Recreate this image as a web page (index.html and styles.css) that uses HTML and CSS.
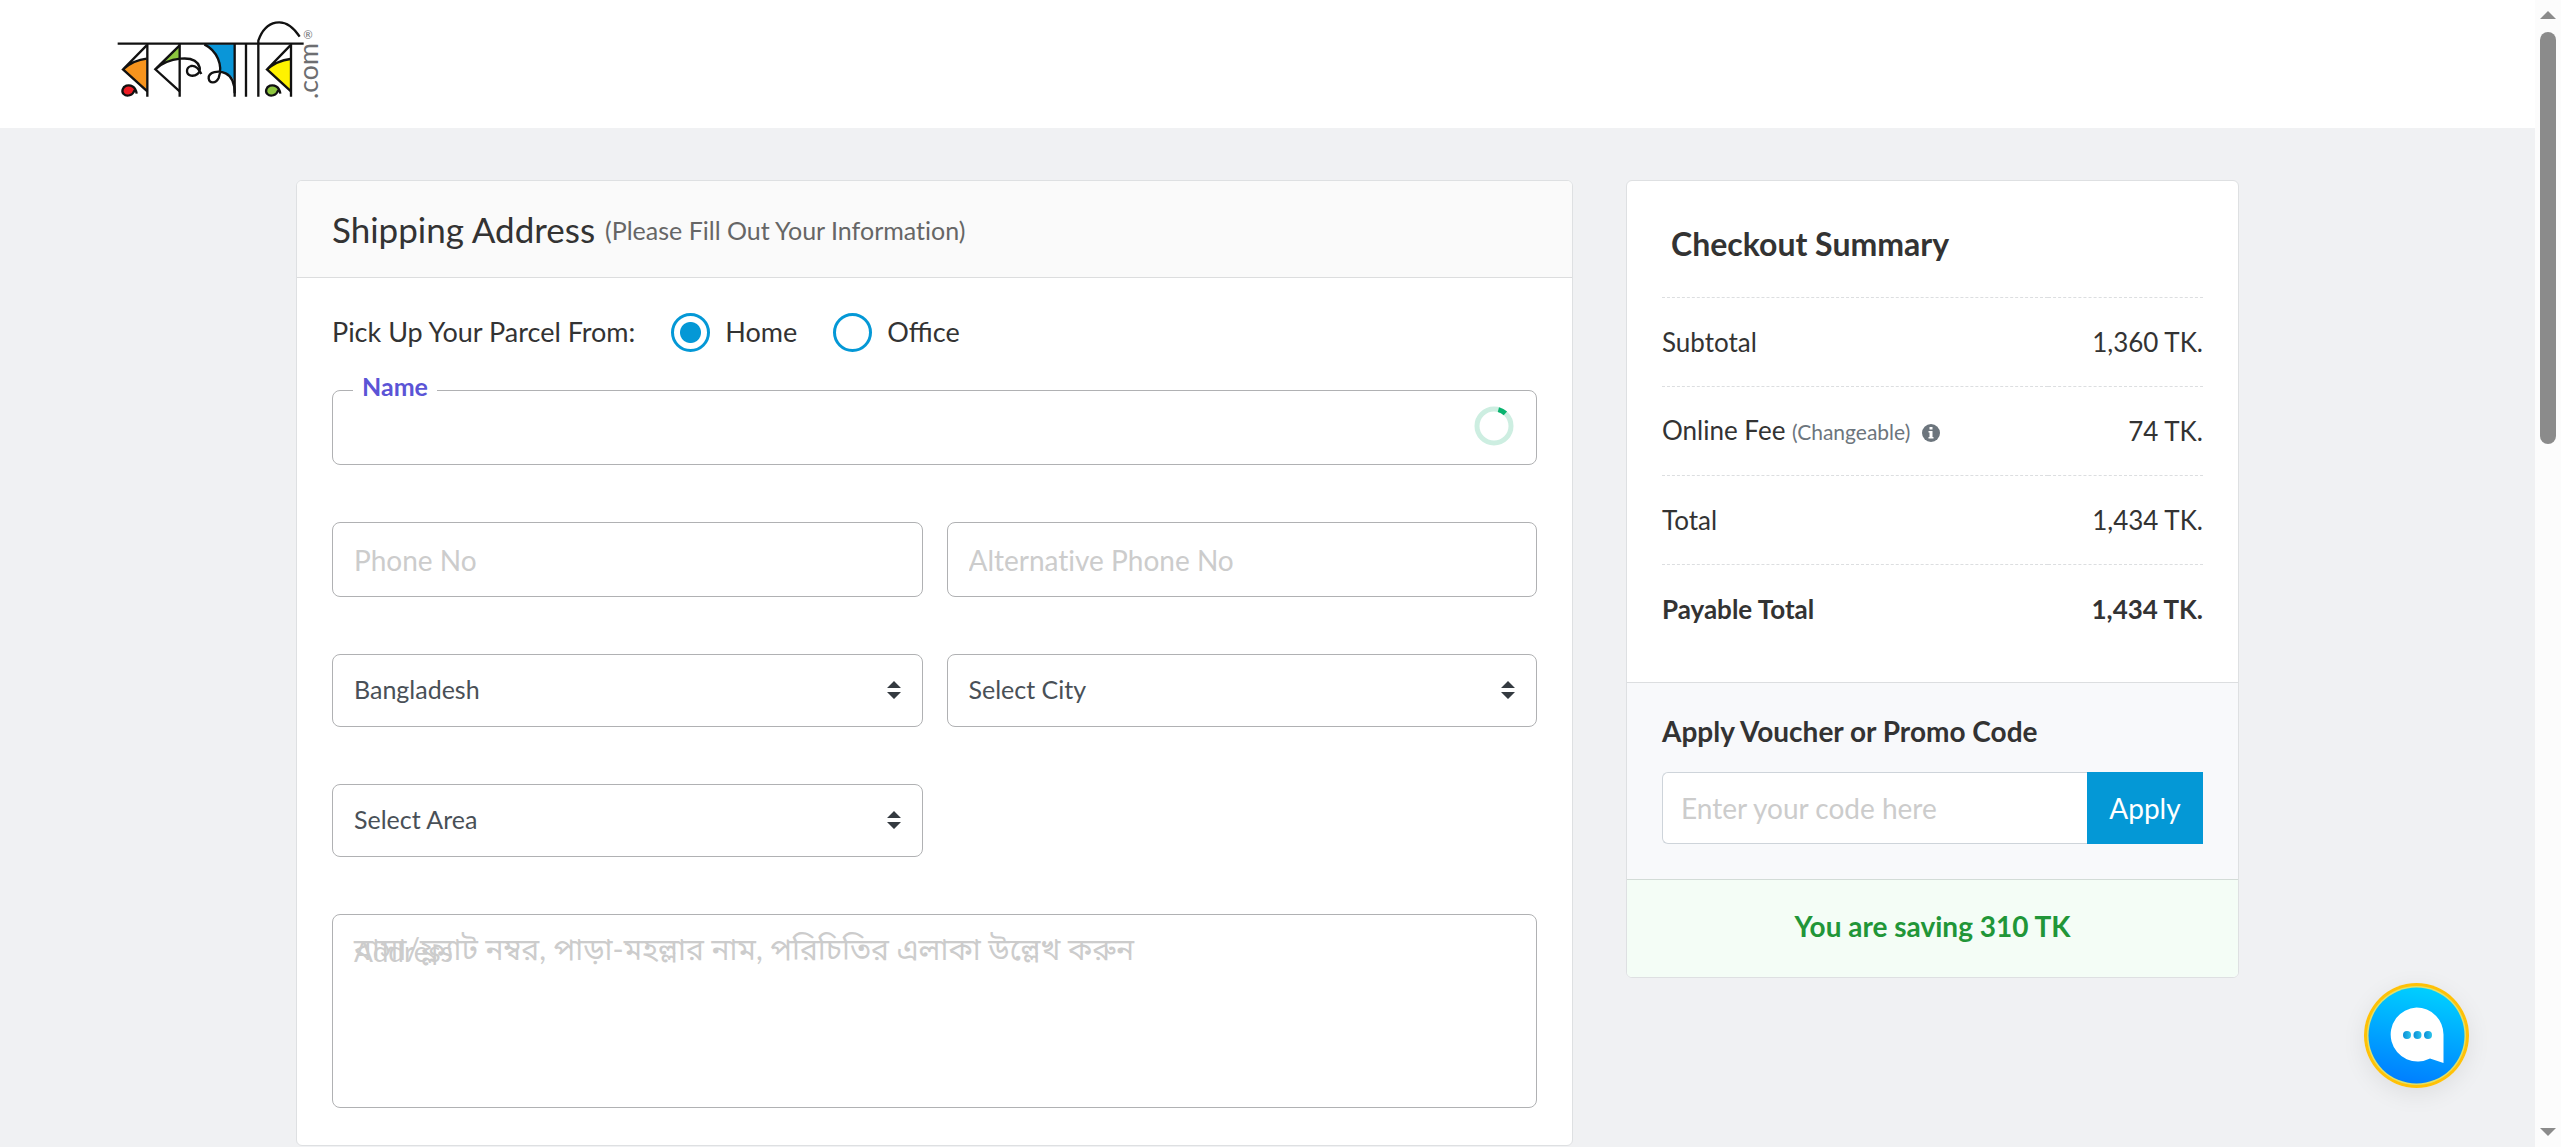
FILE: index.html
```html
<!DOCTYPE html>
<html lang="en">
<head>
<meta charset="utf-8">
<meta name="viewport" content="width=device-width, initial-scale=1">
<title>Rokomari.com - Shipping Address</title>
<link rel="stylesheet" href="styles.css">
</head>
<body>
<div class="viewport">
  <div class="page">
    <header class="site-header">
      <a class="logo" href="#" aria-label="Rokomari.com">
        <svg class="logo-art" viewBox="50 30 642 240" role="img" aria-hidden="true">
          <path d="M139 146 L139 242 L68 178 Q100 150 139 146Z" fill="#f7941d"/>
          <path d="M238 106 L238 145 Q205 148 182 163Z" fill="#8dc63f"/>
          <path d="M312 103 H403 V214 Q392 188 360 186 Q362 130 312 103Z" fill="#0a96d8"/>
          <path d="M570 147 V242 L500 178 Q530 152 570 147Z" fill="#fff200"/>
          <path d="M109 251 C106 228 90 224 78 227 C66 231 63 245 70 252 C79 261 98 257 103 240" fill="#ed1c24"/>
          <path d="M540 251 C537 228 521 224 509 227 C497 231 494 245 501 252 C510 261 529 257 534 240" fill="#8dc63f"/>
          <g fill="none" stroke="#111" stroke-width="7">
            <path d="M52 101 H610"/>
            <path d="M141 101 V260 M238 101 V260 M403 101 V260 M437 101 V260 M572 101 V260"/>
            <path d="M474 260 V92 C494 34 552 10 598 80"/>
            <path d="M139 106 L68 178 L141 244 M139 146 Q100 150 68 178"/>
            <path d="M238 106 L165 178 L238 244 M165 178 C200 145 285 128 298 172 C302 190 285 199 272 197 C256 193 256 173 272 168 C286 165 296 178 303 192"/>
            <path d="M312 103 C350 122 369 165 355 204 C346 222 327 220 325 205 C324 186 355 180 376 190 C398 200 403 224 403 250"/>
            <path d="M570 106 L500 178 L572 244 M570 147 Q530 152 500 178"/>
            <path d="M109 251 C106 228 90 224 78 227 C66 231 63 245 70 252 C79 261 98 257 103 240"/>
            <path d="M540 251 C537 228 521 224 509 227 C497 231 494 245 501 252 C510 261 529 257 534 240"/>
          </g>
          <text class="logo-com" transform="translate(653 267) rotate(-90)">.com</text>
          <text class="logo-reg" x="609" y="86">®</text>
        </svg>
      </a>
    </header>

    <main class="checkout">
      <form class="card shipping" id="shipping-form">
        <div class="card-head">
          <h1 class="card-title">Shipping Address</h1>
          <span class="card-note">(Please Fill Out Your Information)</span>
        </div>
        <div class="card-body">
          <div class="pickup" role="radiogroup" aria-labelledby="pickup-label">
            <span id="pickup-label">Pick Up Your Parcel From:</span>
            <label class="option"><input class="radio" type="radio" name="pickup" value="home" checked>Home</label>
            <label class="option"><input class="radio" type="radio" name="pickup" value="office">Office</label>
          </div>
          <div class="fields">
            <div class="field field-wide">
              <input class="control" id="name" type="text">
              <label class="notch" for="name">Name</label>
              <svg class="spinner" viewBox="0 0 40 40" aria-hidden="true">
                <circle cx="20" cy="20" r="17" fill="none" stroke="#cdeee1" stroke-width="5"/>
                <path d="M24.4 3.6 A17 17 0 0 1 31.4 7.3" fill="none" stroke="#08b36e" stroke-width="5"/>
              </svg>
            </div>
            <div class="field"><input class="control" type="tel" placeholder="Phone No" aria-label="Phone No"></div>
            <div class="field"><input class="control" type="tel" placeholder="Alternative Phone No" aria-label="Alternative Phone No"></div>
            <div class="field">
              <select class="control select" aria-label="Country"><option>Bangladesh</option></select>
              <svg class="arrows" viewBox="0 0 14 18" aria-hidden="true"><path d="M7 0 L14 7 H0Z M0 11 H14 L7 18Z" fill="#343a40"/></svg>
            </div>
            <div class="field">
              <select class="control select" aria-label="City"><option>Select City</option></select>
              <svg class="arrows" viewBox="0 0 14 18" aria-hidden="true"><path d="M7 0 L14 7 H0Z M0 11 H14 L7 18Z" fill="#343a40"/></svg>
            </div>
            <div class="field">
              <select class="control select" aria-label="Area"><option>Select Area</option></select>
              <svg class="arrows" viewBox="0 0 14 18" aria-hidden="true"><path d="M7 0 L14 7 H0Z M0 11 H14 L7 18Z" fill="#343a40"/></svg>
            </div>
            <div class="field field-wide">
              <textarea class="control area" id="address" placeholder="বাসা/ফ্ল্যাট নম্বর, পাড়া-মহল্লার নাম, পরিচিতির এলাকা উল্লেখ করুন"></textarea>
              <label class="area-label" for="address">Address</label>
            </div>
          </div>
        </div>
      </form>

      <aside class="card summary">
        <section class="totals">
          <h2 class="summary-title">Checkout Summary</h2>
          <table class="sums">
            <tbody>
              <tr><th scope="row">Subtotal</th><td>1,360 TK.</td></tr>
              <tr>
                <th scope="row">Online Fee <span class="muted">(Changeable)</span>
                  <svg class="info" viewBox="0 0 18 18" aria-hidden="true"><circle cx="9" cy="9" r="9" fill="#6c757d"/><path d="M7.500 3 H10.500 V5.500 H7.500Z M6.500 7 H10.500 V13 H11.500 V14.500 H6.500 V13 H7.500 V8.500 H6.500Z" fill="#fff"/></svg>
                </th>
                <td>74 TK.</td>
              </tr>
              <tr><th scope="row">Total</th><td>1,434 TK.</td></tr>
              <tr class="payable"><th scope="row">Payable Total</th><td>1,434 TK.</td></tr>
            </tbody>
          </table>
        </section>
        <section class="voucher">
          <label class="voucher-title" for="code">Apply Voucher or Promo Code</label>
          <div class="voucher-row">
            <input class="code" id="code" type="text" placeholder="Enter your code here">
            <button class="apply" type="button">Apply</button>
          </div>
        </section>
        <p class="saving">You are saving 310 TK</p>
      </aside>
    </main>

    <button class="chat" type="button" aria-label="Open chat">
      <svg viewBox="0 0 105 105" aria-hidden="true">
        <defs>
          <linearGradient id="sky" x1="0.6" y1="0" x2="0.4" y2="1"><stop offset="0" stop-color="#00d0ff"/><stop offset="1" stop-color="#007eff"/></linearGradient>
          <linearGradient id="dot" x1="0" y1="0" x2="1" y2="0"><stop offset="0" stop-color="#0a8ed8"/><stop offset="1" stop-color="#2cc4ea"/></linearGradient>
        </defs>
        <circle cx="52.5" cy="52.5" r="52.5" fill="#ffc107"/>
        <circle cx="52.5" cy="52.5" r="49.5" fill="#dfe06a"/>
        <circle cx="52.5" cy="52.5" r="48" fill="url(#sky)"/>
        <path d="M52.5 24.5 A27 27 0 0 1 79.5 51.5 V80 L66 75.500 A27 27 0 1 1 52.5 24.500Z" fill="#fff"/>
        <g fill="url(#dot)"><circle cx="43" cy="52" r="4"/><circle cx="53.500" cy="52" r="4"/><circle cx="64" cy="52" r="4"/></g>
      </svg>
    </button>
  </div>

  <div class="scrollbar" aria-hidden="true">
    <svg class="scroll-arrow" viewBox="0 0 16 8"><path d="M8 0 L16 8 H0Z" fill="#8b8b8b"/></svg>
    <div class="scroll-track"><div class="scroll-thumb"></div></div>
    <svg class="scroll-arrow" viewBox="0 0 16 8"><path d="M0 0 H16 L8 8Z" fill="#8b8b8b"/></svg>
  </div>
</div>
</body>
</html>
```
FILE: styles.css
```css
* { box-sizing: border-box; }

body {
  margin: 0;
  background: #f0f1f3;
  color: #333;
  font-family: Lato, "Noto Sans Bengali", "Noto Sans", sans-serif;
  font-size: 26px;
  line-height: 36px;
}

input, select, textarea, button { font: inherit; }

.viewport {
  display: flex;
  height: 100vh;
  overflow: hidden;
}

.page {
  position: relative;
  flex: 1;
  min-width: 0;
  overflow: hidden;
}

/* Header */
.site-header {
  padding: 20px 117px 28px;
  background: #fff;
}
.logo { display: inline-block; vertical-align: top; }
.logo-art { display: block; width: 214px; height: 80px; overflow: visible; }
.logo-com { font-size: 80px; fill: #6d6e71; }
.logo-reg { font-size: 34px; fill: #6d6e71; }

/* Layout */
.checkout {
  display: grid;
  grid-template-columns: minmax(0, 1277fr) minmax(0, 613fr);
  gap: 53px;
  align-items: start;
  max-width: 1943px;
  margin: 52px auto;
}

.card {
  background: #fff;
  border: 1px solid #dee0e2;
  border-radius: 6px;
  overflow: hidden;
}

.card-head {
  display: flex;
  align-items: center;
  gap: 10px;
  padding: 28px 35px 27px;
  background: #fafafa;
  border-bottom: 1px solid #dcddde;
}
.card-title { margin: 0; font-size: 35px; font-weight: 400; line-height: 41px; }
.card-note { color: #666; font-size: 25px; font-variant-ligatures: none; }
.card-body { padding: 34px 35px 37px; }

/* Shipping form */
.pickup { display: flex; align-items: center; gap: 36px; height: 40px; margin-bottom: 38px; font-size: 27px; }
.option { display: flex; align-items: center; gap: 15px; }
.radio {
  appearance: none;
  width: 39px;
  height: 39px;
  margin: 0;
  border: 3px solid #0498d6;
  border-radius: 50%;
  background: #fff;
}
.radio:checked { background: radial-gradient(circle, #0498d6 10px, #fff 11px); }

.fields {
  display: grid;
  grid-template-columns: 1fr 1fr;
  gap: 57px 24px;
}
.field { position: relative; display: flex; }
.field-wide { grid-column: 1 / -1; }

.control {
  width: 100%;
  height: 75px;
  padding: 0 21px;
  border: 1px solid #b0b1b3;
  border-radius: 8px;
  background: #fff;
  color: #495057;
  font-size: 28px;
  font-variant-ligatures: none;
}
.control::placeholder, .code::placeholder { color: #ccc; opacity: 1; }
.select { height: 73px; padding-bottom: 3px; appearance: none; font-size: 25px; }
.area { height: 194px; padding: 15px 21px; font-size: 30px; line-height: 36px; resize: none; }

.notch {
  position: absolute;
  top: -22px;
  left: 21px;
  padding: 0 9px;
  background: #fff;
  color: #5b54d6;
  font-size: 25px;
  font-weight: 700;
}
.area-label {
  position: absolute;
  top: 19px;
  left: 22px;
  color: #ccc;
  font-size: 28px;
}
.spinner { position: absolute; top: 16px; right: 23px; width: 40px; height: 40px; }
.arrows { position: absolute; top: 27px; right: 22px; width: 14px; height: 18px; pointer-events: none; }

/* Summary */
.totals { padding: 44px 35px 28px; }
.summary-title { margin: 0 0 34px; padding-left: 9px; font-size: 32px; line-height: 38px; }
.sums { width: 100%; border-collapse: collapse; }
.sums th, .sums td { height: 89px; padding: 0; border-top: 1px dashed #dcdee0; font-weight: 400; text-align: left; }
.sums td { text-align: right; }
.sums .payable th, .sums .payable td { font-weight: 700; }
.muted { color: #6c757d; font-size: 21px; }
.info { width: 18px; height: 18px; margin-left: 5px; vertical-align: -2px; }

.voucher {
  padding: 30px 35px 35px;
  background: #f8f9fb;
  border-top: 1px solid #dcdee0;
}
.voucher-title { display: block; margin-bottom: 23px; font-size: 28px; font-weight: 700; }
.voucher-row { display: flex; }
.code {
  flex: 1;
  min-width: 0;
  height: 72px;
  padding: 0 18px;
  border: 1px solid #ced4da;
  border-right: 0;
  border-radius: 6px 0 0 6px;
  background: #fff;
  font-size: 28px;
}
.apply { width: 116px; padding: 0; border: 0; background: #0498d6; color: #fff; font-size: 28px; }

.saving {
  margin: 0;
  padding: 28px 35px 33px;
  background: #f4fdf6;
  border-top: 1px solid #d3dcd7;
  color: #219638;
  font-size: 28px;
  font-weight: 700;
  text-align: center;
}

/* Floating chat button */
.chat {
  position: absolute;
  right: 66px;
  bottom: 59px;
  width: 105px;
  height: 105px;
  padding: 0;
  border: 0;
  border-radius: 50%;
  background: none;
  box-shadow: 0 6px 24px rgba(0, 0, 0, 0.08);
}
.chat svg { display: block; }

/* Scrollbar */
.scrollbar {
  display: flex;
  flex-direction: column;
  align-items: center;
  gap: 13px;
  width: 26px;
  padding: 11px 0;
  background: #fcfcfc;
}
.scroll-arrow { flex: none; width: 16px; height: 8px; }
.scroll-track { flex: 1; width: 16px; }
.scroll-thumb { height: 38%; border-radius: 8px; background: #8b8b8b; }
```
